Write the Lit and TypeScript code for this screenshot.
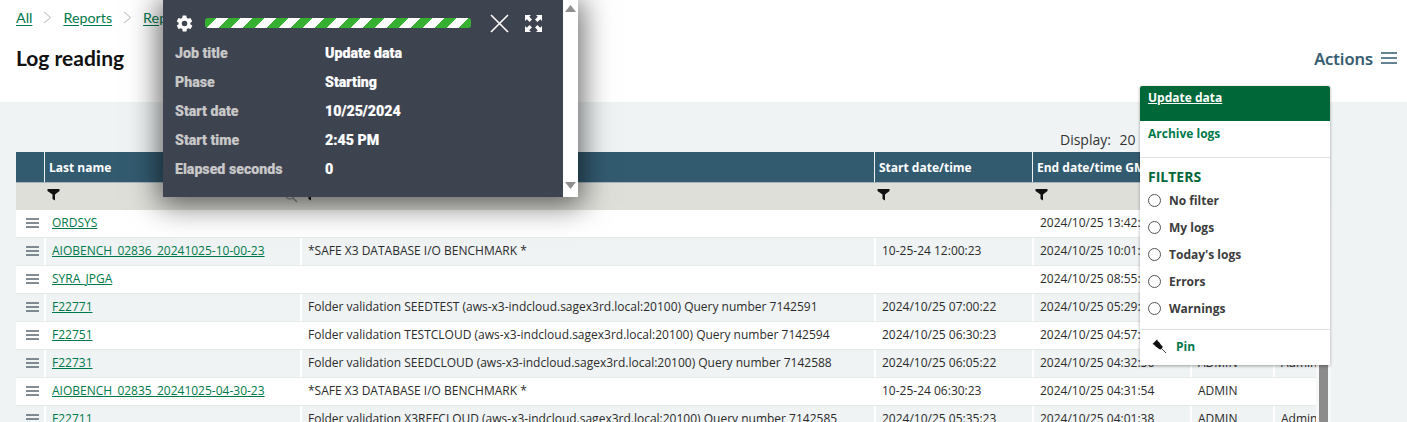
import { LitElement, html, css } from "lit";
import { customElement } from "lit/decorators.js";

const funnel = html`<svg class="funnel" width="13" height="13" viewBox="0 0 13 13"><path d="M0.500 1h12v2L8 6.500V12.500L5.500 11V6.500L0.500 3z" fill="#111"/></svg>`;
const burger = html`<svg class="burger" width="13" height="10" viewBox="0 0 13 10"><path d="M0 1h13M0 5h13M0 9h13" stroke="#5b6770" stroke-width="1.400" fill="none"/></svg>`;

const rows = [
  ["ORDSYS", "", "", "2024/10/25 13:42:31", "ADMIN", ""],
  ["AIOBENCH_02836_20241025-10-00-23", "*SAFE X3 DATABASE I/O BENCHMARK *", "10-25-24 12:00:23", "2024/10/25 10:01:54", "ADMIN", ""],
  ["SYRA_JPGA", "", "", "2024/10/25 08:55:12", "ADMIN", ""],
  ["F22771", "Folder validation SEEDTEST (aws-x3-indcloud.sagex3rd.local:20100) Query number 7142591", "2024/10/25 07:00:22", "2024/10/25 05:29:38", "ADMIN", "Admin"],
  ["F22751", "Folder validation TESTCLOUD (aws-x3-indcloud.sagex3rd.local:20100) Query number 7142594", "2024/10/25 06:30:23", "2024/10/25 04:57:38", "ADMIN", "Admin"],
  ["F22731", "Folder validation SEEDCLOUD (aws-x3-indcloud.sagex3rd.local:20100) Query number 7142588", "2024/10/25 06:05:22", "2024/10/25 04:32:56", "ADMIN", "Admin"],
  ["AIOBENCH_02835_20241025-04-30-23", "*SAFE X3 DATABASE I/O BENCHMARK *", "10-25-24 06:30:23", "2024/10/25 04:31:54", "ADMIN", ""],
  ["F22711", "Folder validation X3REFCLOUD (aws-x3-indcloud.sagex3rd.local:20100) Query number 7142585", "2024/10/25 05:35:23", "2024/10/25 04:01:38", "ADMIN", "Admin"],
];

const popupRows = [
  ["Job title", "Update data"],
  ["Phase", "Starting"],
  ["Start date", "10/25/2024"],
  ["Start time", "2:45 PM"],
  ["Elapsed seconds", "0"],
];

@customElement("app-root")
export class AppRoot extends LitElement {
  static styles = css`
    :host { display: block; position: relative; width: 1407px; height: 422px; overflow: hidden; background: #eff3f4; font-family: "Open Sans", sans-serif; color: #2b2b2b; }
    a { color: #00794a; text-decoration: underline; }
    .head { background: #fff; height: 102px; padding: 0 10px 0 16px; box-sizing: border-box; display: flex; flex-direction: column; }
    .crumbs { display: flex; align-items: center; height: 34px; font: 400 14.300px "Lato", sans-serif; }
    .crumbs a { text-underline-offset: 2px; }
    .chev { margin: 0 11px; }
    .title-row { display: flex; justify-content: space-between; align-items: center; height: 46px; }
    h1 { margin: 0; font: 700 21px "Lato", sans-serif; color: #111; }
    .actions { display: flex; align-items: center; gap: 8px; font-size: 16.500px; font-weight: 600; color: #335b70; margin-top: 2px; -webkit-text-stroke: .2px #335b70; }
    .main { padding: 0 0 0 16px; position: relative; }
    .display { height: 50px; padding-left: 1044px; box-sizing: border-box; padding-top: 28px; font-size: 14px; line-height: 20px; word-spacing: 5px; color: #333; }
    .table { width: 1300px; }
    .tr { display: grid; grid-template-columns: 28px 256px 574px 158px 158px 83px 43px; }
    .th { background: #335b70; height: 30px; color: #fff; font-size: 12px; font-weight: 700; }
    .th > div { display: flex; align-items: center; padding-left: 4px; border-left: 1px solid #eef1f2; white-space: nowrap; overflow: hidden; }
    .th > div:first-child { border-left: none; }
    .filters { background: #dfdfda; height: 28px; border-top: 1px solid #a8b5bc; box-sizing: border-box; }
    .filters > div { padding: 6px 0 0 3px; position: relative; }
    .filters svg.funnel { display: block; margin-top: -1px; }
    .search { position: absolute; right: 2px; top: 6px; }
    .td { height: 28px; font-size: 12px; line-height: 26px; box-sizing: border-box; border-bottom: 1px solid #e6eaeb; white-space: nowrap; }
    .td > div { overflow: hidden; padding-left: 6px; border-left: 2px solid transparent; box-sizing: border-box; }
    .td > div:first-child { padding-left: 10px; border-left: none; display: flex; align-items: center; height: 26px; }
    .td.alt { background: #eff3f4; }
    .td.alt > div { border-left-color: #fff; }
    .td.alt > div:first-child { border-left: none; }
    .td.plain { background: #fff; }
    .thumb { position: absolute; left: 1319px; top: 365px; width: 9px; height: 57px; background: #8c8c8c; }
    .strip { position: absolute; left: 1316px; top: 210px; width: 15px; height: 212px; background: #f7f8f8; }

    .job { position: absolute; left: 163px; top: 0; width: 415px; height: 197px; display: flex; box-shadow: 0 4px 28px 4px rgba(0,0,0,.6); font: 900 14.200px "Roboto", sans-serif; -webkit-text-stroke: .15px currentColor; }
    .job-body { width: 400px; background: #3e4350; padding: 0 12px; box-sizing: border-box; }
    .job-top { display: flex; align-items: center; height: 46px; }
    .bar { width: 266px; height: 10px; margin-left: 11px; border-radius: 3px; background: repeating-linear-gradient(-45deg, #35b031 0 8.500px, #fff 8.500px 17px); }
    .x { margin-left: 19px; }
    .expand { margin-left: 16px; }
    .job-row { display: grid; grid-template-columns: 150px 1fr; height: 29px; align-items: center; color: #c8c8c8; }
    .job-row b { color: #fff; font-weight: 900; }
    .job-rows { margin-top: -8px; }
    .vscroll { width: 15px; background: #fff; display: flex; flex-direction: column; justify-content: space-between; align-items: center; padding: 5px 0 8px; box-sizing: border-box; }

    .menu { position: absolute; left: 1140px; top: 86px; width: 190px; height: 279px; background: #fff; box-shadow: 0 1px 3px rgba(0,0,0,.35); font-size: 12px; font-weight: 700; display: flex; flex-direction: column; }
    .menu .on { height: 35px; background: #006738; padding: 4px 8px; box-sizing: border-box; line-height: 16px; border-radius: 2px 2px 0 0; }
    .menu .on a { color: #fff; }
    .menu .arch { height: 37px; padding: 5px 8px 0; box-sizing: border-box; line-height: 16px; color: #00794a; border-bottom: 1px solid #dfe3e4; }
    .menu h2 { margin: 0; font-size: 14px; line-height: 18px; color: #006738; padding: 10px 8px 0; font-weight: 700; }
    .opt { display: flex; align-items: center; gap: 8px; padding-left: 8px; height: 27px; color: #3c3c3c; }
    .opt i { width: 11px; height: 11px; border: 1px solid #555; border-radius: 50%; display: block; }
    .opts { padding-top: 1px; flex: 1; border-bottom: 1px solid #dfe3e4; }
    .pin { display: flex; align-items: center; height: 35px; padding: 0 0 3px 12px; box-sizing: border-box; gap: 9px; color: #00794a; }
  `;

  render() {
    return html`
      <div class="head">
        <div class="crumbs">
          <a href="#">All</a>
          <svg class="chev" width="9" height="13" viewBox="0 0 9 13"><path d="M1 1l6.500 5.500L1 12" fill="none" stroke="#b5b5b5" stroke-width="1"/></svg>
          <a href="#">Reports</a>
          <svg class="chev" width="9" height="13" viewBox="0 0 9 13"><path d="M1 1l6.500 5.500L1 12" fill="none" stroke="#b5b5b5" stroke-width="1"/></svg>
          <a href="#">Reports</a>
        </div>
        <div class="title-row">
          <h1>Log reading</h1>
          <div class="actions">Actions
            <svg width="16" height="12" viewBox="0 0 16 12"><path d="M0 1h16M0 6h16M0 11h16" stroke="#335b70" stroke-width="1.300" fill="none"/></svg>
          </div>
        </div>
      </div>
      <div class="main">
        <div class="display">Display: 20</div>
        <div class="table">
          <div class="tr th">
            <div></div><div>Last name</div><div></div><div>Start date/time</div><div>End date/time GMT</div><div>User</div><div>Name</div>
          </div>
          <div class="tr filters">
            <div></div>
            <div>${funnel}
              <svg class="search" width="14" height="14" viewBox="0 0 14 14"><circle cx="6" cy="6" r="4" fill="none" stroke="#8a8f92" stroke-width="1.200"/><path d="M9 9l4 4" stroke="#8a8f92" stroke-width="1.200"/></svg>
            </div>
            <div>${funnel}</div><div>${funnel}</div><div>${funnel}</div><div>${funnel}</div><div>${funnel}</div>
          </div>
          ${rows.map((r, i) => html`
            <div class="tr td ${i % 2 ? "alt" : "plain"}">
              <div>${burger}</div>
              <div><a href="#">${r[0]}</a></div>
              <div>${r[1]}</div><div>${r[2]}</div><div>${r[3]}</div><div>${r[4]}</div><div>${r[5]}</div>
            </div>`)}
        </div>
      </div>
      <div class="strip"></div>
      <div class="thumb"></div>

      <div class="job">
        <div class="job-body">
          <div class="job-top">
            <svg width="19" height="19" viewBox="0 0 24 24"><path fill="#fff" fill-rule="evenodd" d="M19.400 13c.1-.3.1-.7.1-1s0-.7-.1-1l2.100-1.600c.2-.1.2-.4.1-.6l-2-3.500c-.1-.2-.4-.3-.6-.2l-2.500 1c-.5-.4-1.100-.7-1.700-1L14.400 2.400C14.400 2.200 14.200 2 14 2h-4c-.2 0-.4.2-.5.400L9.100 5.100c-.6.3-1.200.6-1.700 1l-2.500-1c-.2-.1-.5 0-.6.2l-2 3.500c-.1.2-.1.5.1.6L4.600 11c0 .3-.1.700-.1 1s0 .7.1 1l-2.100 1.600c-.2.100-.2.400-.1.600l2 3.500c.1.2.4.3.6.2l2.500-1c.5.400 1.100.7 1.700 1l.4 2.700c.1.2.3.4.5.4h4c.2 0 .4-.2.5-.4l.4-2.700c.6-.3 1.200-.6 1.700-1l2.500 1c.2.100.5 0 .6-.2l2-3.500c.1-.2.1-.5-.1-.6zM12 15.500a3.500 3.500 0 1 1 0-7 3.500 3.500 0 0 1 0 7z"/></svg>
            <div class="bar"></div>
            <svg class="x" width="19" height="19" viewBox="0 0 19 19"><path d="M1 1l17 17M18 1L1 18" stroke="#fff" stroke-width="1.600" fill="none"/></svg>
            <svg class="expand" width="17" height="17" viewBox="0 0 17 17"><g fill="#fff"><path d="M0 0h6L4.200 1.800 7 4.600 4.600 7 1.800 4.200 0 6zM17 0v6l-1.800-1.800L12.400 7 10 4.600l2.800-2.800L11 0zM0 17v-6l1.800 1.800L4.600 10 7 12.400l-2.800 2.800L6 17zM17 17h-6l1.800-1.800L10 12.400 12.400 10l2.800 2.800L17 11z"/></g></svg>
          </div>
          <div class="job-rows">
            ${popupRows.map(([k, v]) => html`<div class="job-row"><span>${k}</span><b>${v}</b></div>`)}
          </div>
        </div>
        <div class="vscroll">
          <svg width="11" height="7" viewBox="0 0 11 7"><path d="M5.500 0L11 7H0z" fill="#8f8f8f"/></svg>
          <svg width="11" height="7" viewBox="0 0 11 7"><path d="M5.500 7L0 0h11z" fill="#8f8f8f"/></svg>
        </div>
      </div>

      <div class="menu">
        <div class="on"><a href="#">Update data</a></div>
        <div class="arch">Archive logs</div>
        <h2>FILTERS</h2>
        <div class="opts">
          ${["No filter", "My logs", "Today's logs", "Errors", "Warnings"].map((o) => html`<div class="opt"><i></i>${o}</div>`)}
        </div>
        <div class="pin">
          <svg width="15" height="15" viewBox="0 0 15 15"><path d="M0.500 5L5 0.500 6 2.500 7 3 9.500 6.500 10.500 7 10.500 8.500 8.500 10.500 7 10 6.500 9.500 3 7 2.500 6z" fill="#111"/><path d="M8.500 8.500L14 14" stroke="#111" stroke-width=".8"/></svg>
          Pin
        </div>
      </div>
    `;
  }
}
